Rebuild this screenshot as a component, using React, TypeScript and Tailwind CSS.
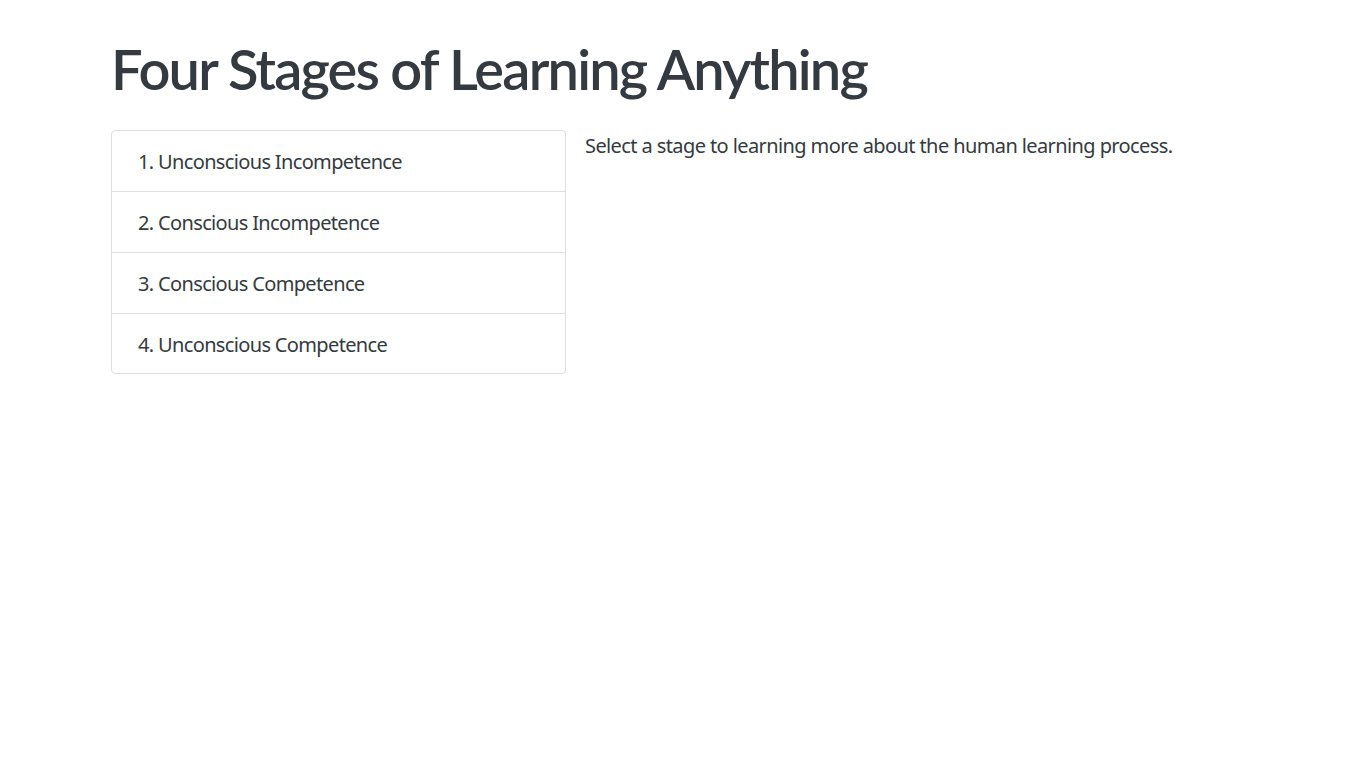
const stages = [
  "1. Unconscious Incompetence",
  "2. Conscious Incompetence",
  "3. Conscious Competence",
  "4. Unconscious Competence",
];

export default function App() {
  return (
    <div className="min-h-screen bg-white text-[#343a40] font-['Noto_Sans',sans-serif]">
      <div className="pl-[111px] pt-[35px]">
        <h1 className="text-[56px] leading-[67px] font-semibold font-['Lato',sans-serif] tracking-[-1.8px] mb-[28px]">
          Four Stages of Learning Anything
        </h1>
        <div className="flex items-start gap-[19px]">
          <ul className="w-[455px] border border-[#dfdfdf] rounded-[4px]">
            {stages.map((s, i) => (
              <li
                key={s}
                className={
                  "px-[26px] pt-[16px] pb-[14px] last:pb-[13px] text-[20px] leading-[30px] tracking-[-0.65px] " +
                  (i > 0 ? "border-t border-[#dfdfdf]" : "")
                }
              >
                {s}
              </li>
            ))}
          </ul>
          <p className="text-[20px] leading-[30px] tracking-[-0.6px] pt-[1px]">
            Select a stage to learning more about the human learning process.
          </p>
        </div>
      </div>
    </div>
  );
}
